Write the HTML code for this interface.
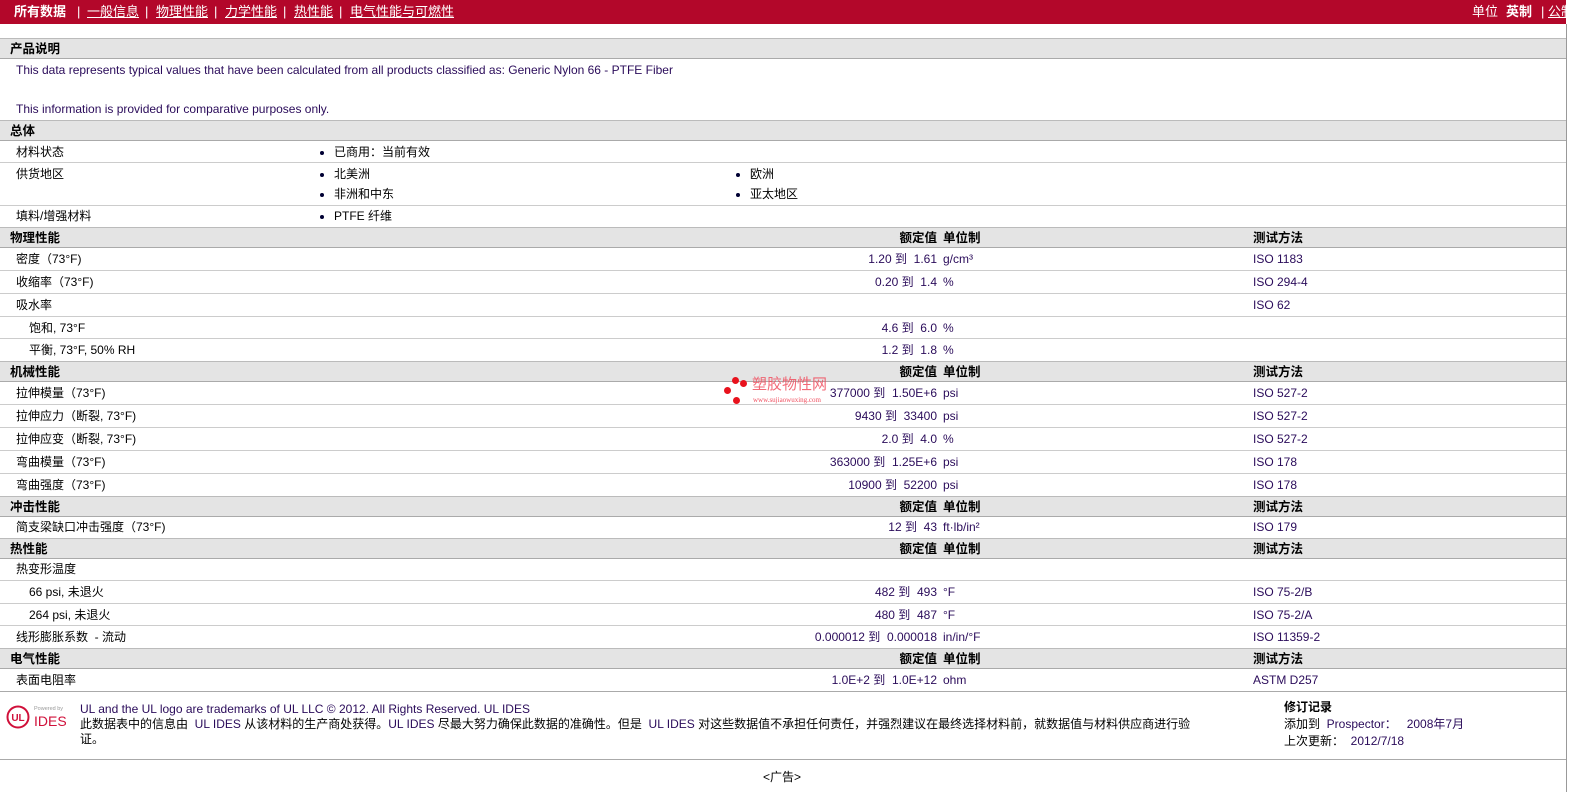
<!DOCTYPE html>
<html><head><meta charset="utf-8">
<style>
*{margin:0;padding:0;box-sizing:border-box}
html{overflow:hidden;width:1585px;height:792px}
body{width:1585px;height:792px;background:#fff;font-family:"Liberation Sans","Noto Sans CJK SC",sans-serif;font-size:12px;line-height:14px;color:#000;position:relative;overflow:hidden}
.top{position:absolute;left:0;top:0;width:1566px;height:24px;background:#b3072a;color:#fff;font-size:13px;line-height:16px}
.top span{position:absolute;top:4px;white-space:nowrap}
.top u{text-decoration:underline}
.frame{position:absolute;left:0;top:24px;width:1567px;height:768px;border-right:1px solid #999}
.r{position:absolute;left:0;width:1566px;border-bottom:1px solid #ccc}
.h{background:#e4e4e4;border-top:1px solid #bbb;border-bottom:1px solid #aaa;font-weight:bold;font-size:12.5px}
.r span{position:absolute;white-space:nowrap;line-height:14px}
.l{left:16px}
.hl{left:10px}
.v{right:629px;text-align:right}
.u{left:943px}
.t{left:1253px}
.b{left:320px}
.b2{left:736px}
.b::before,.b2::before{content:"";display:inline-block;width:4px;height:4px;border-radius:50%;background:#003;margin-right:10px;vertical-align:middle}
.p{color:#2a0b5a}
</style></head><body>
<div class="top">
<span style="left:14px;font-weight:bold">所有数据</span>
<span style="left:77px">|</span><span style="left:87px"><u>一般信息</u></span>
<span style="left:145px">|</span><span style="left:156px"><u>物理性能</u></span>
<span style="left:214px">|</span><span style="left:225px"><u>力学性能</u></span>
<span style="left:283px">|</span><span style="left:294px"><u>热性能</u></span>
<span style="left:339px">|</span><span style="left:350px"><u>电气性能与可燃性</u></span>
<span style="left:1472px">单位</span><span style="left:1506px;font-weight:bold">英制</span><span style="left:1541px">|</span><span style="left:1548px"><u>公制</u></span>
</div>
<div class="frame"></div>

<div class="r h" style="top:38px;height:21px"><span class="hl" style="top:3px">产品说明</span></div>
<div class="r" style="top:59px;height:61px;border:none">
<span class="l p" style="top:4px">This data represents typical values that have been calculated from all products classified as: Generic Nylon 66 - PTFE Fiber</span>
<span class="l p" style="top:43px">This information is provided for comparative purposes only.</span></div>
<div class="r h" style="top:120px;height:21px"><span class="hl" style="top:3px">总体</span></div>
<div class="r" style="top:141px;height:22px"><span class="l" style="top:4px">材料状态</span><span class="b" style="top:4px">已商用：当前有效</span></div>
<div class="r" style="top:163px;height:43px"><span class="l" style="top:4px">供货地区</span><span class="b" style="top:4px">北美洲</span><span class="b2" style="top:4px">欧洲</span><span class="b" style="top:24px">非洲和中东</span><span class="b2" style="top:24px">亚太地区</span></div>
<div class="r" style="top:206px;height:22px;border:none"><span class="l" style="top:3px">填料/增强材料</span><span class="b" style="top:3px">PTFE 纤维</span></div>

<div class="r h" style="top:227px;height:21px"><span class="hl" style="top:3px">物理性能</span><span class="v" style="top:3px">额定值</span><span class="u" style="top:3px">单位制</span><span class="t" style="top:3px">测试方法</span></div>
<div class="r" style="top:248px;height:23px"><span class="l" style="top:4px">密度（73°F)</span><span class="v p" style="top:4px">1.20 到&nbsp; 1.61</span><span class="u p" style="top:4px">g/cm³</span><span class="t p" style="top:4px">ISO 1183</span></div>
<div class="r" style="top:271px;height:23px"><span class="l" style="top:4px">收缩率（73°F)</span><span class="v p" style="top:4px">0.20 到&nbsp; 1.4</span><span class="u p" style="top:4px">%</span><span class="t p" style="top:4px">ISO 294-4</span></div>
<div class="r" style="top:294px;height:23px"><span class="l" style="top:4px">吸水率</span><span class="t p" style="top:4px">ISO 62</span></div>
<div class="r" style="top:317px;height:22px"><span class="l" style="top:4px;left:29px">饱和, 73°F</span><span class="v p" style="top:4px">4.6 到&nbsp; 6.0</span><span class="u p" style="top:4px">%</span></div>
<div class="r" style="top:339px;height:22px;border:none"><span class="l" style="top:4px;left:29px">平衡, 73°F, 50% RH</span><span class="v p" style="top:4px">1.2 到&nbsp; 1.8</span><span class="u p" style="top:4px">%</span></div>

<div class="r h" style="top:361px;height:21px"><span class="hl" style="top:3px">机械性能</span><span class="v" style="top:3px">额定值</span><span class="u" style="top:3px">单位制</span><span class="t" style="top:3px">测试方法</span></div>
<div class="r" style="top:382px;height:23px"><span class="l" style="top:4px">拉伸模量（73°F)</span><span class="v p" style="top:4px">377000 到&nbsp; 1.50E+6</span><span class="u p" style="top:4px">psi</span><span class="t p" style="top:4px">ISO 527-2</span></div>
<div class="r" style="top:405px;height:23px"><span class="l" style="top:4px">拉伸应力（断裂, 73°F)</span><span class="v p" style="top:4px">9430 到&nbsp; 33400</span><span class="u p" style="top:4px">psi</span><span class="t p" style="top:4px">ISO 527-2</span></div>
<div class="r" style="top:428px;height:23px"><span class="l" style="top:4px">拉伸应变（断裂, 73°F)</span><span class="v p" style="top:4px">2.0 到&nbsp; 4.0</span><span class="u p" style="top:4px">%</span><span class="t p" style="top:4px">ISO 527-2</span></div>
<div class="r" style="top:451px;height:23px"><span class="l" style="top:4px">弯曲模量（73°F)</span><span class="v p" style="top:4px">363000 到&nbsp; 1.25E+6</span><span class="u p" style="top:4px">psi</span><span class="t p" style="top:4px">ISO 178</span></div>
<div class="r" style="top:474px;height:22px;border:none"><span class="l" style="top:4px">弯曲强度（73°F)</span><span class="v p" style="top:4px">10900 到&nbsp; 52200</span><span class="u p" style="top:4px">psi</span><span class="t p" style="top:4px">ISO 178</span></div>

<div class="r h" style="top:496px;height:21px"><span class="hl" style="top:3px">冲击性能</span><span class="v" style="top:3px">额定值</span><span class="u" style="top:3px">单位制</span><span class="t" style="top:3px">测试方法</span></div>
<div class="r" style="top:517px;height:21px;border:none"><span class="l" style="top:3px">简支梁缺口冲击强度（73°F)</span><span class="v p" style="top:3px">12 到&nbsp; 43</span><span class="u p" style="top:3px">ft·lb/in²</span><span class="t p" style="top:3px">ISO 179</span></div>

<div class="r h" style="top:538px;height:21px"><span class="hl" style="top:3px">热性能</span><span class="v" style="top:3px">额定值</span><span class="u" style="top:3px">单位制</span><span class="t" style="top:3px">测试方法</span></div>
<div class="r" style="top:559px;height:22px"><span class="l" style="top:3px">热变形温度</span></div>
<div class="r" style="top:581px;height:23px"><span class="l" style="top:4px;left:29px">66 psi, 未退火</span><span class="v p" style="top:4px">482 到&nbsp; 493</span><span class="u p" style="top:4px">°F</span><span class="t p" style="top:4px">ISO 75-2/B</span></div>
<div class="r" style="top:604px;height:22px"><span class="l" style="top:4px;left:29px">264 psi, 未退火</span><span class="v p" style="top:4px">480 到&nbsp; 487</span><span class="u p" style="top:4px">°F</span><span class="t p" style="top:4px">ISO 75-2/A</span></div>
<div class="r" style="top:626px;height:22px;border:none"><span class="l" style="top:4px">线形膨胀系数&nbsp; - 流动</span><span class="v p" style="top:4px">0.000012 到&nbsp; 0.000018</span><span class="u p" style="top:4px">in/in/°F</span><span class="t p" style="top:4px">ISO 11359-2</span></div>

<div class="r h" style="top:648px;height:21px"><span class="hl" style="top:3px">电气性能</span><span class="v" style="top:3px">额定值</span><span class="u" style="top:3px">单位制</span><span class="t" style="top:3px">测试方法</span></div>
<div class="r" style="top:669px;height:23px;border-bottom:1px solid #aaa"><span class="l" style="top:4px">表面电阻率</span><span class="v p" style="top:4px">1.0E+2 到&nbsp; 1.0E+12</span><span class="u p" style="top:4px">ohm</span><span class="t p" style="top:4px">ASTM D257</span></div>

<div class="r" style="top:692px;height:68px;border-bottom:1px solid #aaa">
<svg style="position:absolute;left:6px;top:11px" width="60" height="28" viewBox="0 0 60 28">
<circle cx="12" cy="14" r="10.5" fill="none" stroke="#d0103a" stroke-width="2"/>
<text x="12" y="18" font-size="10" font-weight="bold" fill="#d0103a" text-anchor="middle" font-family="Liberation Sans">UL</text>
<text x="28" y="7" font-size="5.5" fill="#999" font-family="Liberation Sans">Powered by</text>
<text x="28" y="23" font-size="14" fill="#d0103a" font-family="Liberation Sans">IDES</text></svg>
<span class="p" style="left:80px;top:10px">UL and the UL logo are trademarks of UL LLC © 2012. All Rights Reserved. UL IDES</span>
<span style="left:80px;top:25px">此数据表中的信息由&nbsp; <span class="p" style="position:static">UL IDES</span> 从该材料的生产商处获得。<span class="p" style="position:static">UL IDES</span> 尽最大努力确保此数据的准确性。但是&nbsp; <span class="p" style="position:static">UL IDES</span> 对这些数据值不承担任何责任，并强烈建议在最终选择材料前，就数据值与材料供应商进行验</span>
<span style="left:80px;top:40px">证。</span>
<span style="left:1284px;top:8px;font-weight:bold">修订记录</span>
<span style="left:1284px;top:25px">添加到&nbsp; <span class="p" style="position:static">Prospector：&nbsp;&nbsp; 2008年7月</span></span>
<span style="left:1284px;top:42px">上次更新：&nbsp; <span class="p" style="position:static">2012/7/18</span></span>
</div>
<div style="position:absolute;left:763px;top:770px">&lt;广告&gt;</div>

<div style="position:absolute;left:722px;top:374px;width:130px;height:36px">
<div style="position:absolute;left:10px;top:3px;width:7px;height:7px;border-radius:50%;background:#e8121d"></div>
<div style="position:absolute;left:18px;top:6px;width:7px;height:7px;border-radius:50%;background:#e8121d"></div>
<div style="position:absolute;left:2px;top:13px;width:7px;height:7px;border-radius:50%;background:#e8121d"></div>
<div style="position:absolute;left:11px;top:23px;width:7px;height:7px;border-radius:50%;background:#e8121d"></div>
<span style="position:absolute;left:30px;top:2px;font-size:15px;line-height:18px;color:#f05060;opacity:.85;white-space:nowrap">塑胶物性网</span>
<span style="position:absolute;left:31px;top:22px;font-size:7px;line-height:8px;color:#f05060;white-space:nowrap;font-family:'Liberation Serif',serif">www.sujiaowuxing.com</span>
</div>
</body></html>
